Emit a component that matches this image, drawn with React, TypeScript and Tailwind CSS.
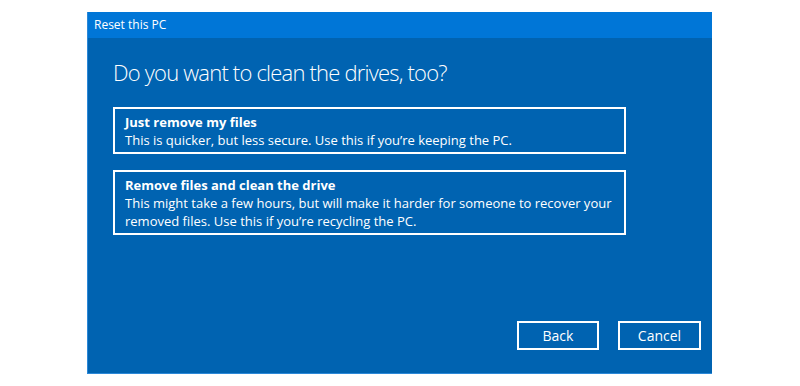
import React from 'react';

const font = { fontFamily: '"Open Sans", "Noto Sans", sans-serif' };

const Option = ({ title, lines }: { title: string; lines: string }) => (
  <button className="w-[513px] border-2 border-white px-[10px] pt-[4px] pb-[3px] text-left text-white">
    <div className="text-[13px] font-bold leading-[18px]">{title}</div>
    <div className="text-[13px] leading-[18px]">{lines}</div>
  </button>
);

export default function App() {
  return (
    <div className="h-[386px] w-[800px] bg-white pl-[87px] pt-[12px]" style={font}>
      <div className="flex h-[362px] w-[625px] flex-col border-b border-l border-[#2b88d8] bg-[#0063b1]">
        <div className="flex h-[26px] shrink-0 items-center bg-[#0076d7] px-[6px] text-[12px] text-white">
          Reset this PC
        </div>
        <div className="flex flex-1 flex-col px-[25px]">
          <h1 className="mt-[19px] text-[22px] font-light leading-[30px] tracking-[-0.8px] text-white">
            Do you want to clean the drives, too?
          </h1>
          <div className="mt-[20px] flex flex-col gap-[16px]">
            <Option
              title="Just remove my files"
              lines="This is quicker, but less secure. Use this if you’re keeping the PC."
            />
            <Option
              title="Remove files and clean the drive"
              lines="This might take a few hours, but will make it harder for someone to recover your removed files. Use this if you’re recycling the PC."
            />
          </div>
          <div className="mt-auto mb-[23px] -mr-[14px] flex justify-end gap-[19px]">
            <button className="h-[29px] w-[82px] border-2 border-white text-[14px] text-white">Back</button>
            <button className="h-[29px] w-[83px] border-2 border-white text-[14px] text-white">Cancel</button>
          </div>
        </div>
      </div>
    </div>
  );
}
